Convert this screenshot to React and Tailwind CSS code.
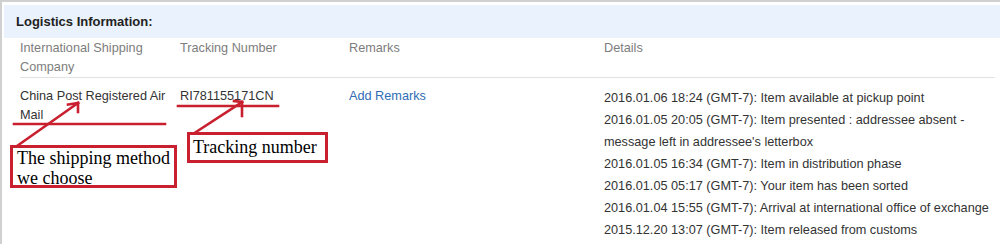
export default function App() {
  const details = [
    "2016.01.06 18:24 (GMT-7): Item available at pickup point",
    "2016.01.05 20:05 (GMT-7): Item presented : addressee absent - message left in addressee's letterbox",
    "2016.01.05 16:34 (GMT-7): Item in distribution phase",
    "2016.01.05 05:17 (GMT-7): Your item has been sorted",
    "2016.01.04 15:55 (GMT-7): Arrival at international office of exchange",
    "2015.12.20 13:07 (GMT-7): Item released from customs",
  ];
  const red = "#c8202f";
  return (
    <div
      className="relative w-[1000px] h-[244px] overflow-hidden bg-white"
      style={{ fontFamily: '"Liberation Sans", Arial, sans-serif' }}
    >
      <div className="h-full border-l-2 border-t-2 border-[#d0d0d0] pl-[2px] pt-[3px]">
        <div className="h-[33px] bg-[#e9f2fd] flex items-center pl-[12px] text-[13px] font-bold text-[#222]">
          Logistics Information:
        </div>
        <div className="ml-[16px] mr-[5px]">
          <div className="grid grid-cols-[160px_169px_255px_1fr] border-b border-[#e2e2e2] text-[12.7px] leading-[19px] text-[#7d7d7d] pt-[1px] h-[40px]">
            <div>
              International Shipping
              <br />
              Company
            </div>
            <div>Tracking Number</div>
            <div>Remarks</div>
            <div>Details</div>
          </div>
          <div className="grid grid-cols-[160px_169px_255px_386px] pt-[9px] text-[12.7px] text-[#333] items-start">
            <div className="leading-[19px] pr-2">China Post Registered Air Mail</div>
            <div className="leading-[19px]">RI781155171CN</div>
            <div className="leading-[19px] text-[#2f6db5]">Add Remarks</div>
            <div className="leading-[22px] text-[#333]">
              {details.map((d) => (
                <div key={d}>{d}</div>
              ))}
            </div>
          </div>
        </div>
      </div>

      <svg
        className="absolute inset-0 pointer-events-none"
        width="1000"
        height="244"
        viewBox="0 0 1000 244"
      >
        <g stroke={red} strokeWidth="2.6" fill="none" strokeLinecap="square">
          <line x1="14" y1="124" x2="165" y2="124" />
          <line x1="178" y1="106" x2="278" y2="106" />
          <line x1="17" y1="146" x2="78" y2="103" />
          <line x1="78" y1="103" x2="68" y2="104.5" />
          <line x1="78" y1="103" x2="78" y2="112" />
          <line x1="196" y1="132" x2="242" y2="102" />
          <line x1="242" y1="102" x2="234" y2="101" />
          <line x1="242" y1="102" x2="242" y2="116" />
        </g>
      </svg>

      <div
        className="absolute left-[10px] top-[145px] w-[167px] h-[43px] border-[3px] border-[#c8202f] bg-white pl-[4px] text-[18px] leading-[20px] text-black whitespace-nowrap"
        style={{ fontFamily: '"Liberation Serif", "Times New Roman", serif' }}
      >
        The shipping method
        <br />
        we choose
      </div>
      <div
        className="absolute left-[187px] top-[132px] w-[141px] h-[31px] border-[3px] border-[#c8202f] bg-white pl-[3px] text-[18px] leading-[24px] text-black"
        style={{ fontFamily: '"Liberation Serif", "Times New Roman", serif' }}
      >
        Tracking number
      </div>
    </div>
  );
}
